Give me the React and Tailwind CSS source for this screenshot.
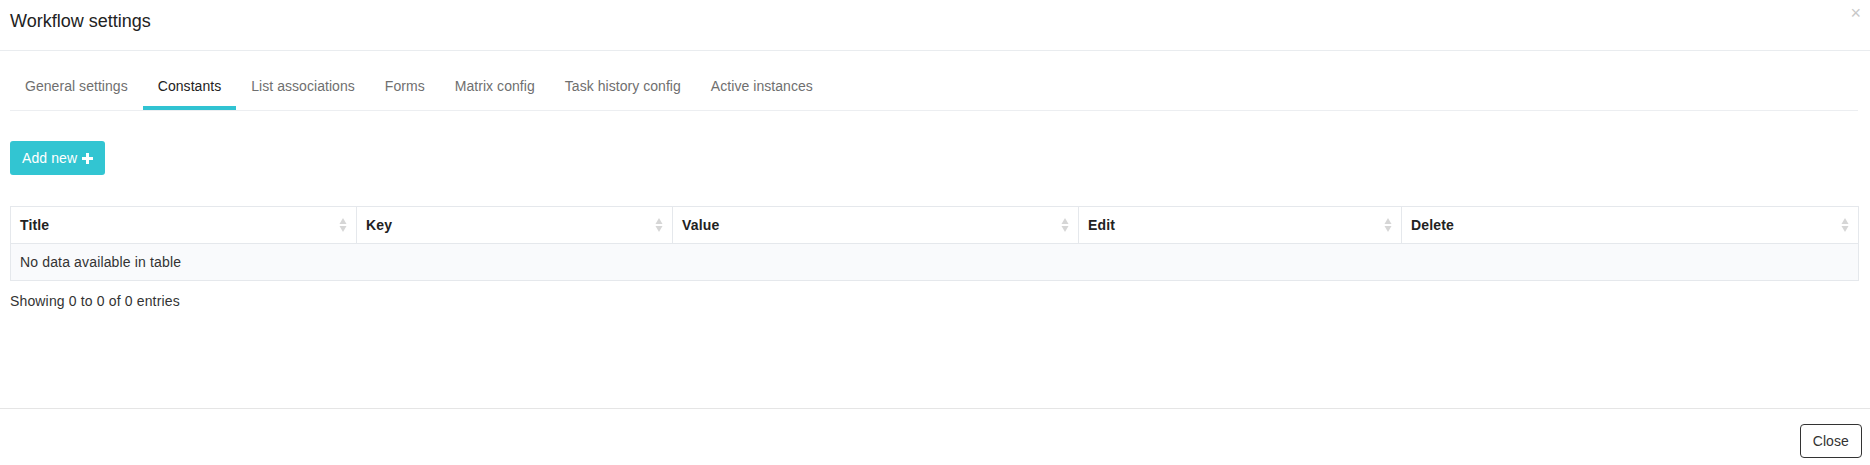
import React from "react";

const tabs = [
  "General settings",
  "Constants",
  "List associations",
  "Forms",
  "Matrix config",
  "Task history config",
  "Active instances",
];

const columns = [
  { title: "Title", width: "w-[346px]" },
  { title: "Key", width: "w-[316px]" },
  { title: "Value", width: "w-[406px]" },
  { title: "Edit", width: "w-[323px]" },
  { title: "Delete", width: "w-[457px]" },
];

const SortIcon = () => (
  <svg width="8" height="16" viewBox="0 0 8 16" className="shrink-0">
    <path d="M4 1 L7.5 7 L0.5 7 Z" fill="#d6d6d6" />
    <path d="M4 15 L7.5 9 L0.5 9 Z" fill="#d6d6d6" />
  </svg>
);

const App = () => {
  const active = "Constants";

  return (
    <div
      className="w-[1870px] h-[465px] bg-white flex flex-col text-[#333] overflow-hidden"
      style={{ fontFamily: '"Liberation Sans", Arial, sans-serif' }}
    >
      {/* header */}
      <div className="h-[51px] shrink-0 border-b border-[#e9ecef] px-[10px] pt-[11px] relative">
        <h4 className="text-[18px] leading-[21px] text-[#222]">Workflow settings</h4>
        <button className="absolute right-[9px] top-[4px] text-[#c8c8c8] text-[18px] leading-none">
          ×
        </button>
      </div>

      {/* body */}
      <div className="flex-1 px-[10px] pt-[11px]">
        <ul className="flex border-b border-[#eceef1] w-[1848px]">
          {tabs.map((t) => (
            <li
              key={t}
              className={
                t === active
                  ? "px-[15px] pt-[14px] pb-[10px] text-[14px] tracking-[0.05px] leading-[20px] text-[#222] border-b-[4px] border-[#31c3d2]"
                  : "px-[15px] pt-[14px] pb-[10px] text-[14px] tracking-[0.05px] leading-[20px] text-[#6f6f6f] border-b-[4px] border-transparent"
              }
            >
              {t}
            </li>
          ))}
        </ul>

        <button className="mt-[30px] h-[34px] px-[12px] rounded-[3px] bg-[#32c5d2] text-white text-[14px] tracking-[0.1px] flex items-center gap-[5px]">
          Add new
          <svg width="11" height="11" viewBox="0 0 11 11">
            <path d="M4 0 H7 V4 H11 V7 H7 V11 H4 V7 H0 V4 H4 Z" fill="white" />
          </svg>
        </button>

        <table className="mt-[31px] w-[1848px] table-fixed border-collapse text-[14px] tracking-[0.15px]">
          <thead>
            <tr>
              {columns.map((c) => (
                <th
                  key={c.title}
                  className={`${c.width} h-[37px] border border-[#e5e8ec] px-[9px] text-left font-bold text-[#222]`}
                >
                  <div className="flex items-center justify-between">
                    <span>{c.title}</span>
                    <SortIcon />
                  </div>
                </th>
              ))}
            </tr>
          </thead>
          <tbody>
            <tr>
              <td
                colSpan={5}
                className="h-[37px] border border-[#e5e8ec] bg-[#f9fafc] px-[9px] text-[#333]"
              >
                No data available in table
              </td>
            </tr>
          </tbody>
        </table>

        <div className="mt-[10px] text-[14px] tracking-[0.15px] leading-[20px] text-[#333]">
          Showing 0 to 0 of 0 entries
        </div>
      </div>

      {/* footer */}
      <div className="h-[57px] shrink-0 border-t border-[#e5e5e5] flex justify-end items-start pt-[15px] pr-[8px]">
        <button className="h-[34px] px-[12px] rounded-[4px] border border-[#333] text-[14px] tracking-[0.1px] text-[#333] bg-white">
          Close
        </button>
      </div>
    </div>
  );
};

export default App;
